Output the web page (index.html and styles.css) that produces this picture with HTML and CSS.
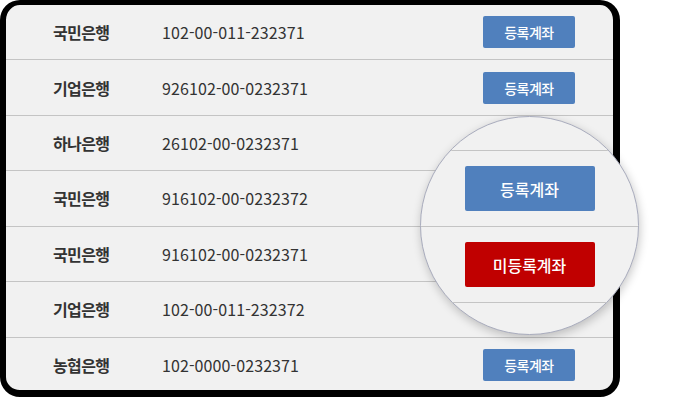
FILE: index.html
```html
<!DOCTYPE html>
<html lang="ko">
<head>
<meta charset="utf-8">
<title>계좌 목록</title>
<link rel="stylesheet" href="styles.css">
</head>
<body>
<div class="stage">
  <div class="frame">
    <div class="row"><span class="bank">국민은행</span><span class="acct">102-00-011-232371</span><span class="btn">등록계좌</span></div>
    <div class="row"><span class="bank">기업은행</span><span class="acct">926102-00-0232371</span><span class="btn">등록계좌</span></div>
    <div class="row"><span class="bank">하나은행</span><span class="acct">26102-00-0232371</span></div>
    <div class="row"><span class="bank">국민은행</span><span class="acct">916102-00-0232372</span></div>
    <div class="row"><span class="bank">국민은행</span><span class="acct">916102-00-0232371</span></div>
    <div class="row"><span class="bank">기업은행</span><span class="acct">102-00-011-232372</span></div>
    <div class="row"><span class="bank">농협은행</span><span class="acct">102-0000-0232371</span><span class="btn">등록계좌</span></div>
  </div>
  <div class="lens">
    <div class="lens-top"></div>
    <div class="lens-row"><span class="lbtn">등록계좌</span></div>
    <div class="lens-row"><span class="lbtn red">미등록계좌</span></div>
    <div class="lens-row"></div>
  </div>
</div>
</body>
</html>
```
FILE: styles.css
```css
html, body {
  margin: 0;
  padding: 0;
  background: #ffffff;
}
body {
  font-family: "Noto Sans CJK KR", "Noto Sans", sans-serif;
  color: #333333;
}
.stage {
  position: relative;
  width: 678px;
  height: 398px;
}
.frame {
  box-sizing: border-box;
  width: 620px;
  height: 397px;
  border-style: solid;
  border-color: #000000;
  border-width: 5px 7px 7px 6px;
  border-radius: 20px;
  background: #f1f1f1;
  display: grid;
  grid-template-rows: repeat(7, 55.43px);
  overflow: hidden;
}
.row {
  box-sizing: border-box;
  display: flex;
  align-items: center;
  border-bottom: 1px solid #c4c4c4;
  padding: 0 38px 0 47px;
}
.row:last-child {
  border-bottom: none;
}
.bank {
  width: 109px;
  font-size: 16px;
  font-weight: 700;
  letter-spacing: -0.6px;
}
.acct {
  font-size: 16px;
  letter-spacing: 0.1px;
}
.btn {
  margin-left: auto;
  width: 92px;
  height: 32px;
  border-radius: 2px;
  background: #5080bd;
  color: #ffffff;
  font-size: 14px;
  font-weight: 500;
  letter-spacing: -0.5px;
  display: flex;
  align-items: center;
  justify-content: center;
}
.lens {
  position: absolute;
  left: 420px;
  top: 116px;
  width: 219px;
  height: 219px;
  box-sizing: border-box;
  border: 1px solid #a9acbd;
  border-radius: 50%;
  background: #f1f1f1;
  box-shadow: 1px 3px 10px rgba(0, 0, 0, 0.22);
  overflow: hidden;
  display: flex;
  flex-direction: column;
}
.lens-top {
  height: 33px;
  flex: none;
}
.lens-row {
  flex: none;
  box-sizing: border-box;
  height: 76px;
  border-top: 1px solid #c4c4c4;
  display: flex;
  align-items: center;
  justify-content: center;
}
.lbtn {
  width: 130px;
  height: 45px;
  border-radius: 2px;
  background: #5080bd;
  color: #ffffff;
  font-size: 16px;
  font-weight: 500;
  display: flex;
  align-items: center;
  justify-content: center;
}
.lbtn.red {
  background: #c00000;
}
```
